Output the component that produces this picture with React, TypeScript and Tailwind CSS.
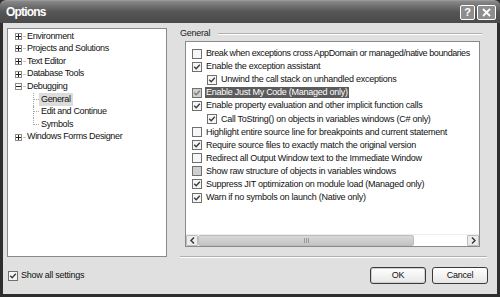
import React from 'react';

type Opt = { label: string; checked: boolean; indent?: boolean; selected?: boolean; grey?: boolean };

const options: Opt[] = [
  { label: 'Break when exceptions cross AppDomain or managed/native boundaries', checked: false },
  { label: 'Enable the exception assistant', checked: true },
  { label: 'Unwind the call stack on unhandled exceptions', checked: true, indent: true },
  { label: 'Enable Just My Code (Managed only)', checked: true, selected: true, grey: true },
  { label: 'Enable property evaluation and other implicit function calls', checked: true },
  { label: 'Call ToString() on objects in variables windows (C# only)', checked: true, indent: true },
  { label: 'Highlight entire source line for breakpoints and current statement', checked: false },
  { label: 'Require source files to exactly match the original version', checked: true },
  { label: 'Redirect all Output Window text to the Immediate Window', checked: false },
  { label: 'Show raw structure of objects in variables windows', checked: false, grey: true },
  { label: 'Suppress JIT optimization on module load (Managed only)', checked: true },
  { label: 'Warn if no symbols on launch (Native only)', checked: true },
];

const tree = [
  { label: 'Environment', kind: 'plus' },
  { label: 'Projects and Solutions', kind: 'plus' },
  { label: 'Text Editor', kind: 'plus' },
  { label: 'Database Tools', kind: 'plus' },
  { label: 'Debugging', kind: 'minus' },
  { label: 'General', kind: 'child', selected: true },
  { label: 'Edit and Continue', kind: 'child' },
  { label: 'Symbols', kind: 'last' },
  { label: 'Windows Forms Designer', kind: 'plus' },
];

function CheckBox({ checked, grey }: { checked: boolean; grey?: boolean }) {
  return (
    <div
      className={`w-[10px] h-[10px] shrink-0 border border-[#6f6f6f] flex items-center justify-center ${
        grey ? 'bg-[#cfcfcf]' : 'bg-[#f6f6f6]'
      }`}
    >
      {checked && (
        <svg width="8" height="8" viewBox="0 0 8 8">
          <path d="M1.2 3.8 L3.2 5.8 L6.8 1.8" fill="none" stroke={grey ? '#7a7a7a' : '#3c3c3c'} strokeWidth="1.4" />
        </svg>
      )}
    </div>
  );
}

function Expander({ minus }: { minus?: boolean }) {
  return (
    <div className="w-[7px] h-[7px] shrink-0 border border-[#8c8c8c] bg-white flex items-center justify-center relative">
      <div className="absolute w-[5px] h-px bg-[#222]" />
      {!minus && <div className="absolute w-px h-[5px] bg-[#222]" />}
    </div>
  );
}

export default function App() {
  return (
    <div className="w-[500px] h-[297px] bg-[#2e2e2e] flex flex-col overflow-hidden" style={{ fontFamily: '"Liberation Sans", Arial, sans-serif' }}>
      {/* title bar */}
      <div className="h-[23px] shrink-0 flex items-center justify-between pl-[6px] pr-[4px] bg-gradient-to-b from-[#8a8a8a] via-[#555] to-[#4a4a4a] border-t border-[#9a9a9a] rounded-t-[6px]">
        <span className="text-white font-bold text-[12px] tracking-[-0.8px]">Options</span>
        <div className="flex gap-[2px] mt-[1px]">
          <div className="w-[15px] h-[15px] border border-white rounded-[2px] bg-[#8d8d8d] flex items-center justify-center text-white font-bold text-[11px] leading-none">?</div>
          <div className="w-[19px] h-[15px] border border-white rounded-[2px] bg-[#8d8d8d] flex items-center justify-center">
            <svg width="9" height="9" viewBox="0 0 9 9">
              <path d="M1 1 L8 8 M8 1 L1 8" stroke="#fff" strokeWidth="1.8" />
            </svg>
          </div>
        </div>
      </div>

      {/* body */}
      <div className="flex-1 bg-[#e0e0e0] mx-[3px] mb-[3px] flex flex-col text-[9px] tracking-[-0.26px] text-[#111]">
        <div className="flex">
          {/* tree */}
          <div className="ml-[4px] mt-[5px] w-[160px] h-[229px] bg-white border border-[#8a8a8a] pt-[1px] pl-[7px] tracking-[-0.35px]">
            {tree.map((t) => (
              <div key={t.label} className="h-[12.6px] flex items-center relative">
                {(t.kind === 'plus' || t.kind === 'minus') && (
                  <>
                    <Expander minus={t.kind === 'minus'} />
                    <div className="w-[2px] ml-px border-t border-dotted border-[#c4c4c4]" />
                    <span className="ml-[1px] px-px">{t.label}</span>
                  </>
                )}
                {(t.kind === 'child' || t.kind === 'last') && (
                  <>
                    <div
                      className={`absolute left-[18px] top-0 w-px border-l border-dotted border-[#a8a8a8] ${
                        t.kind === 'last' ? 'h-[6.5px]' : 'h-full'
                      }`}
                    />
                    <div className="ml-[18px] w-[6px] border-t border-dotted border-[#a8a8a8]" />
                    <span className={`px-[2px] ${t.selected ? 'bg-[#dcdcdc]' : ''}`}>{t.label}</span>
                  </>
                )}
              </div>
            ))}
          </div>

          {/* right group */}
          <div className="ml-[13px] mt-[5px] w-[307px] flex flex-col">
            <div className="h-[12px] flex items-center">
              <span className="text-[#222]">General</span>
              <div className="flex-1 ml-[8px] mr-[5px] border-t border-[#b0b0b0] border-b-white border-b" />
            </div>
            <div className="ml-[5px] mt-[1px] w-[295px] h-[206px] bg-white border border-[#8a8a8a] flex flex-col">
              <div className="flex-1 pt-[5px] pl-[6px] overflow-hidden">
                {options.map((o, i) => (
                  <div key={o.label} className={`h-[13.1px] flex items-center ${o.indent ? 'pl-[15px]' : ''}`}>
                    <CheckBox checked={o.checked} grey={o.grey} />
                    <span
                      className={`ml-[3px] whitespace-nowrap leading-[11px] px-px ${
                        o.selected ? 'bg-[#5b5b5b] text-white' : ''
                      } ${i === 0 ? 'tracking-[-0.4px]' : ''}`}
                    >
                      {o.label}
                    </span>
                  </div>
                ))}
              </div>
              {/* horizontal scrollbar */}
              <div className="h-[12px] flex bg-white border-t border-[#eee]">
                <div className="w-[12px] h-full border border-[#bdbdbd] bg-[#ececec] rounded-[1px] flex items-center justify-center">
                  <svg width="5" height="7" viewBox="0 0 5 7">
                    <path d="M4 0.5 L1 3.5 L4 6.5" fill="none" stroke="#333" strokeWidth="1.4" />
                  </svg>
                </div>
                <div className="w-[216px] h-full bg-gradient-to-b from-[#d8d8d8] to-[#c4c4c4] border border-[#bdbdbd] rounded-[2px] flex items-center justify-center">
                  <div className="flex gap-[1px]">
                    <div className="w-px h-[5px] bg-[#9a9a9a]" />
                    <div className="w-px h-[5px] bg-[#9a9a9a]" />
                    <div className="w-px h-[5px] bg-[#9a9a9a]" />
                  </div>
                </div>
                <div className="flex-1" />
                <div className="w-[12px] h-full border border-[#bdbdbd] bg-[#ececec] rounded-[1px] flex items-center justify-center">
                  <svg width="5" height="7" viewBox="0 0 5 7">
                    <path d="M1 0.5 L4 3.5 L1 6.5" fill="none" stroke="#333" strokeWidth="1.4" />
                  </svg>
                </div>
              </div>
            </div>
            <div className="mt-[9px] border-t border-[#b0b0b0] border-b border-b-white" />
          </div>
        </div>

        {/* bottom row */}
        <div className="flex items-start mt-[9px]">
          <div className="ml-[5px] mt-[2px] flex items-center">
            <CheckBox checked />
            <span className="ml-[3px]">Show all settings</span>
          </div>
          <div className="ml-auto mr-[9px] flex gap-[6px]">
            <button className="w-[56px] h-[17px] border border-[#3a3a3a] rounded-[3px] bg-gradient-to-b from-white to-[#e6e6e6] text-[9px] text-[#111] shadow-[inset_0_0_0_1px_#cfcfcf]">
              OK
            </button>
            <button className="w-[56px] h-[17px] border border-[#3a3a3a] rounded-[3px] bg-gradient-to-b from-white to-[#e6e6e6] text-[9px] text-[#111]">
              Cancel
            </button>
          </div>
        </div>
      </div>
    </div>
  );
}
